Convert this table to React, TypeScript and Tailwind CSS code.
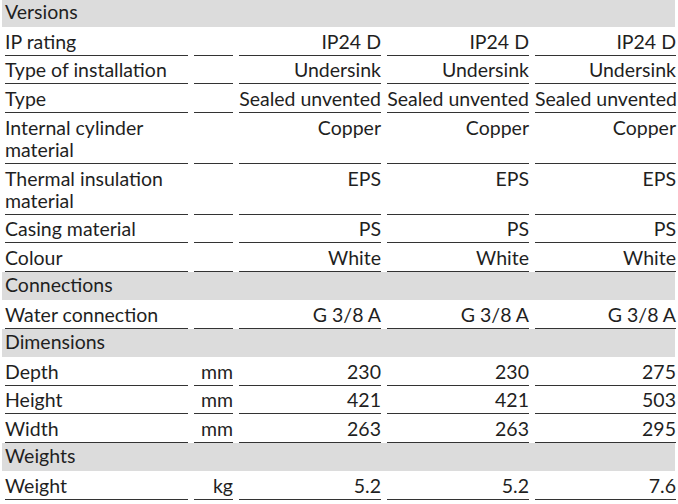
type Row =
  | { kind: "head"; label: string }
  | { kind: "row"; label: string; unit?: string; values: string[]; tall?: boolean };

const rows: Row[] = [
  { kind: "head", label: "Versions" },
  { kind: "row", label: "IP rating", values: ["IP24 D", "IP24 D", "IP24 D"] },
  { kind: "row", label: "Type of installation", values: ["Undersink", "Undersink", "Undersink"] },
  { kind: "row", label: "Type", values: ["Sealed unvented", "Sealed unvented", "Sealed unvented"] },
  { kind: "row", label: "Internal cylinder material", values: ["Copper", "Copper", "Copper"], tall: true },
  { kind: "row", label: "Thermal insulation material", values: ["EPS", "EPS", "EPS"], tall: true },
  { kind: "row", label: "Casing material", values: ["PS", "PS", "PS"] },
  { kind: "row", label: "Colour", values: ["White", "White", "White"] },
  { kind: "head", label: "Connections" },
  { kind: "row", label: "Water connection", values: ["G 3/8 A", "G 3/8 A", "G 3/8 A"] },
  { kind: "head", label: "Dimensions" },
  { kind: "row", label: "Depth", unit: "mm", values: ["230", "230", "275"] },
  { kind: "row", label: "Height", unit: "mm", values: ["421", "421", "503"] },
  { kind: "row", label: "Width", unit: "mm", values: ["263", "263", "295"] },
  { kind: "head", label: "Weights" },
  { kind: "row", label: "Weight", unit: "kg", values: ["5.2", "5.2", "7.6"] },
];

const cell = "flex flex-col justify-end border-b-[1.5px] border-[#333] pb-[2px]";

export default function App() {
  return (
    <div
      className="w-[678px] h-[504px] overflow-hidden bg-white text-[#1f1f1f] text-[19.5px] leading-[22px]"
      style={{ fontFamily: "Lato, 'Liberation Sans', sans-serif" }}
    >
      <div className="ml-[2px] w-[673px]">
        {rows.map((r, i) =>
          r.kind === "head" ? (
            <div
              key={i}
              className={`flex items-end bg-[#dcdcdc] pl-[3px] pb-[4px] ${i === 0 ? "h-[27px]" : "h-[28.5px]"}`}
            >
              {r.label}
            </div>
          ) : (
            <div
              key={i}
              className={`grid grid-cols-[183px_39px_142px_142px_141px] gap-x-[6px] pl-[3px] ${r.tall ? "h-[51px]" : "h-[28.5px]"}`}
            >
              <div className={`${cell} ${r.tall ? "" : "whitespace-nowrap"}`}>
                {r.tall ? (
                  <span className="block w-[170px]">{r.label}</span>
                ) : (
                  r.label
                )}
              </div>
              <div className={`${cell} text-right`}>{r.unit ?? ""}</div>
              {r.values.map((v, j) => (
                <div key={j} className={`${cell} text-right whitespace-nowrap`}>
                  <span>{v}</span>
                  {r.tall && <span>&nbsp;</span>}
                </div>
              ))}
            </div>
          )
        )}
      </div>
    </div>
  );
}
